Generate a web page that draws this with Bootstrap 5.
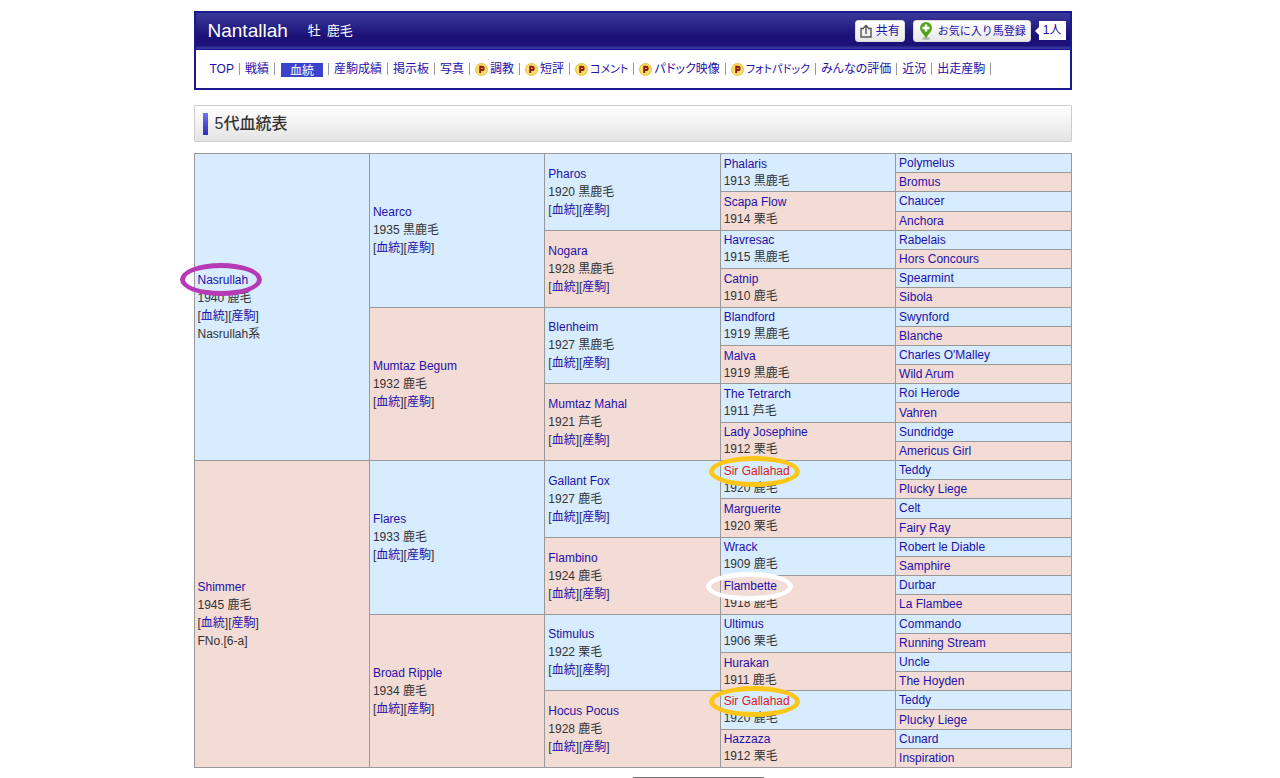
<!DOCTYPE html>
<html lang="ja">
<head>
<meta charset="utf-8">
<meta name="viewport" content="width=device-width, initial-scale=1">
<title>Nantallah 5代血統表</title>
<link href="https://cdn.jsdelivr.net/npm/bootstrap@5.3.0/dist/css/bootstrap.min.css" rel="stylesheet">
<style>
body { font: 12px/18px "Liberation Sans", "Noto Sans CJK JP", sans-serif; font-feature-settings: "palt"; color: #333; padding: 11px 15px 0 0; }
a { color: #1f10a8; text-decoration: none; }
a:hover { text-decoration: underline; }
.page-wrap { max-width: 878px; }
.horse-head { border: 2px solid #1a1a90; }
.horse-bar { height: 37px; background: linear-gradient(#393998, #1b1177 65%, #1b1177 90%, #34349a 96%); border-bottom: 1px solid #1a1a90; padding: 0 4px 1px 12px; color: #fff; }
.horse-bar h1 { font-size: 19px; line-height: 24px; }
.horse-bar .sex { font-size: 13px; }
.tool-btn { height: 22px; font-size: 12px; line-height: 20px; color: #1f10a8; background: linear-gradient(#fff, #e8e8e8); border: 1px solid #ddd; border-radius: 3px; }
.fav-btn { font-size: 11px; }
.fan-count { position: relative; height: 19px; line-height: 19px; background: #fff; color: #1f10a8; }
.fan-count::before { content: ""; position: absolute; left: -4px; top: 6px; border: 4px solid transparent; border-left: 0; border-right-color: #fff; }
.horse-nav { height: 38px; padding: 11px 9px 0; }
.horse-nav li { display: flex; height: 16px; line-height: 16px; white-space: nowrap; }
.horse-nav li::after { content: ""; width: 1px; height: 12px; margin-top: 2px; background: #999; }
.horse-nav a { padding: 0 5px; }
.horse-nav .kana { font-size: 11px; }
.horse-nav svg { width: 13px; height: 13px; margin-right: 2px; vertical-align: -3px; }
.horse-nav .current-tab { background: #3b42cc; color: #fff; padding: 0 9px; margin: 2px 5px 0 6px; }
.section-title { height: 37px; margin: 15px 0 11px; padding-left: 8px; border: 1px solid #ccc; background: linear-gradient(#fff, #e4e4e4); border-radius: 1px; }
.section-title h2 { font-size: 16px; line-height: 22px; border-left: 5px solid #3b42cc; border-image: linear-gradient(#7078f0, #2a2ab4) 1; padding-left: 7px; font-weight: 500; }
.pedigree { width: 100%; height: 615px; table-layout: fixed; border-collapse: collapse; }
.pedigree td { border: 1px solid #999; padding: 0 3px; vertical-align: middle; line-height: 18px; }
.pedigree .gen4 { line-height: 17px; }
.pedigree .gen5 { line-height: 16px; }
.sire { background: #d7ecfe; }
.dam { background: #f3dcd6; }
.ancestor { position: relative; }
.inbred { color: #e01818; }
.ring::after { content: ""; position: absolute; pointer-events: none; border: 5px solid; border-radius: 50%; }
.ring-purple::after { left: -18px; top: -8px; width: 82px; height: 33px; border-color: #b63ab6; }
.ring-gold::after { left: -15px; top: -7px; width: 91px; height: 31px; border-color: #ffc61a; }
.ring-white::after { left: -18px; top: -6px; width: 87px; height: 29px; border-color: #fff; }
.next-block { width: 131px; height: 1px; margin: 9px 0 0 50%; background: #777; }
</style>
</head>
<body>
<div class="page-wrap mx-auto">
  <header class="horse-head">
    <div class="horse-bar d-flex align-items-center">
      <h1 class="mb-0 fw-normal">Nantallah</h1>
      <span class="sex ms-3 ps-1">牡&emsp14;&thinsp;鹿毛</span>
      <button type="button" class="tool-btn d-flex align-items-center px-1 py-0 ms-auto"><svg class="me-1" width="12" height="14" viewBox="0 0 12 14" fill="none" stroke="#555" stroke-width="1.4"><path d="M4 4.5H1V13h10V4.5H8M6 10V1.5M3.500 4 6 1.500 8.500 4"/></svg>共有</button>
      <button type="button" class="tool-btn fav-btn d-flex align-items-center px-1 py-0 ms-2"><svg class="me-1" width="16" height="20" viewBox="0 0 16 20"><ellipse cx="8" cy="17.500" rx="4" ry="1.500" fill="#bbb"/><path d="M8 18C7 14 2 11 2 7a6 6 0 1 1 12 0c0 4-5 7-6 11z" fill="#55a51c"/><path d="M8 3.500v7M4.500 7h7" stroke="#fff" stroke-width="2.400"/></svg>お気に入り馬登録</button>
      <span class="fan-count px-1 ms-2">1人</span>
    </div>
    <nav aria-label="馬メニュー">
      <svg class="d-none"><symbol id="premium" viewBox="0 0 13 13"><circle cx="6.500" cy="6.500" r="6" fill="#f8dd68" stroke="#e9c044"/><path d="M5.200 10V3.800h1.900a1.600 1.600 0 0 1 0 3.200H5.200" fill="none" stroke="#8c1713" stroke-width="1.900"/></symbol></svg>
      <ul class="horse-nav list-unstyled d-flex mb-0">
        <li><a href="#">TOP</a></li>
        <li><a href="#">戦績</a></li>
        <li><a href="#" class="current-tab" aria-current="page">血統</a></li>
        <li><a href="#">産駒成績</a></li>
        <li><a href="#">掲示板</a></li>
        <li><a href="#">写真</a></li>
        <li><a href="#"><svg><use href="#premium"/></svg>調教</a></li>
        <li><a href="#"><svg><use href="#premium"/></svg>短評</a></li>
        <li><a href="#" class="kana"><svg><use href="#premium"/></svg>コメント</a></li>
        <li><a href="#"><svg><use href="#premium"/></svg>パドック映像</a></li>
        <li><a href="#" class="kana"><svg><use href="#premium"/></svg>フォトパドック</a></li>
        <li><a href="#">みんなの評価</a></li>
        <li><a href="#">近況</a></li>
        <li><a href="#">出走産駒</a></li>
      </ul>
    </nav>
  </header>
  <main>
    <div class="section-title d-flex align-items-center"><h2 class="mb-0">5代血統表</h2></div>
    <table class="pedigree"><tbody id="pedigree"></tbody></table>
    <div class="next-block"></div>
  </main>
</div>
<script src="https://cdn.jsdelivr.net/npm/bootstrap@5.3.0/dist/js/bootstrap.bundle.min.js"></script>
<script>
// Each generation from top to bottom: name|year and coat|family line
const generations = [
  ['Nasrullah|1940 鹿毛|Nasrullah系', 'Shimmer|1945 鹿毛|FNo.[6-a]'],
  ['Nearco|1935 黒鹿毛', 'Mumtaz Begum|1932 鹿毛', 'Flares|1933 鹿毛', 'Broad Ripple|1934 鹿毛'],
  ['Pharos|1920 黒鹿毛', 'Nogara|1928 黒鹿毛', 'Blenheim|1927 黒鹿毛', 'Mumtaz Mahal|1921 芦毛',
   'Gallant Fox|1927 鹿毛', 'Flambino|1924 鹿毛', 'Stimulus|1922 栗毛', 'Hocus Pocus|1928 鹿毛'],
  ['Phalaris|1913 黒鹿毛', 'Scapa Flow|1914 栗毛', 'Havresac|1915 黒鹿毛', 'Catnip|1910 鹿毛',
   'Blandford|1919 黒鹿毛', 'Malva|1919 黒鹿毛', 'The Tetrarch|1911 芦毛', 'Lady Josephine|1912 栗毛',
   'Sir Gallahad|1920 鹿毛', 'Marguerite|1920 栗毛', 'Wrack|1909 鹿毛', 'Flambette|1918 鹿毛',
   'Ultimus|1906 栗毛', 'Hurakan|1911 鹿毛', 'Sir Gallahad|1920 鹿毛', 'Hazzaza|1912 栗毛'],
  ['Polymelus', 'Bromus', 'Chaucer', 'Anchora', 'Rabelais', 'Hors Concours', 'Spearmint', 'Sibola',
   'Swynford', 'Blanche', "Charles O'Malley", 'Wild Arum', 'Roi Herode', 'Vahren', 'Sundridge', 'Americus Girl',
   'Teddy', 'Plucky Liege', 'Celt', 'Fairy Ray', 'Robert le Diable', 'Samphire', 'Durbar', 'La Flambee',
   'Commando', 'Running Stream', 'Uncle', 'The Hoyden', 'Teddy', 'Plucky Liege', 'Cunard', 'Inspiration']
];
const marks = { 'Nasrullah': 'ring ring-purple', 'Sir Gallahad': 'ring ring-gold', 'Flambette': 'ring ring-white' };

let rows = '';
for (let r = 0; r < 32; r++) {
  rows += '<tr>';
  generations.forEach((list, g) => {
    const span = 32 / list.length;
    if (r % span) return;
    const i = r / span;
    const [name, coat, line] = list[i].split('|');
    const link = `<a href="#"${name === 'Sir Gallahad' ? ' class="inbred"' : ''}>${name}</a>`;
    rows += `<td rowspan="${span}" class="gen${g + 1} ${i % 2 ? 'dam' : 'sire'}"><div class="ancestor ${marks[name] || ''}">${link}</div>`;
    if (coat) rows += `<div>${coat}</div>`;
    if (g < 3) rows += '<div>[<a href="#">血統</a>][<a href="#">産駒</a>]</div>';
    if (line) rows += `<div>${line}</div>`;
    rows += '</td>';
  });
  rows += '</tr>';
}
document.getElementById('pedigree').innerHTML = rows;
</script>
</body>
</html>
